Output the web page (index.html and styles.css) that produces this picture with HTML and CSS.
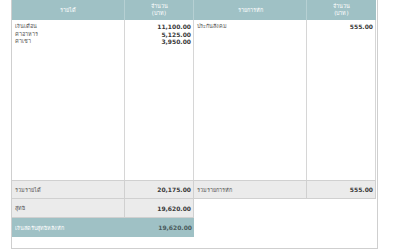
FILE: index.html
```html
<!DOCTYPE html>
<html lang="th">
<head>
<meta charset="utf-8">
<link rel="stylesheet" href="styles.css">
</head>
<body>
<div class="sheet">
  <div class="grid">
    <div class="hd">รายได้</div>
    <div class="hd two">จำนวน<br>(บาท)</div>
    <div class="hd">รายการหัก</div>
    <div class="hd two">จำนวน<br>(บาท)</div>

    <div class="body lbl">
      <div>เงินเดือน</div>
      <div>ค่าอาหาร</div>
      <div>ค่าเช่า</div>
    </div>
    <div class="body num">
      <div>11,100.00</div>
      <div>5,125.00</div>
      <div>3,950.00</div>
    </div>
    <div class="body lbl">
      <div>ประกันสังคม</div>
    </div>
    <div class="body num last">
      <div>555.00</div>
    </div>

    <div class="tot lbl">รวมรายได้</div>
    <div class="tot num">20,175.00</div>
    <div class="tot lbl">รวมรายการหัก</div>
    <div class="tot num last">555.00</div>

    <div class="net lbl">สุทธิ</div>
    <div class="net num">19,620.00</div>
    <div class="blank"></div>

    <div class="fin lbl">เงินสดรับสุทธิหลังหัก</div>
    <div class="fin num">19,620.00</div>
    <div class="blank"></div>
  </div>
</div>
</body>
</html>
```
FILE: styles.css
```css
html, body {
  margin: 0;
  padding: 0;
  background: #ffffff;
}
body {
  font-family: Tahoma, "DejaVu Sans", "Noto Sans", sans-serif;
  color: #444;
}
.sheet {
  margin-left: 11px;
  width: 365px;
  height: 248px;
  border-left: 1px solid #cfcfcf;
  border-right: 1px solid #cfcfcf;
  border-bottom: 1px solid #cfcfcf;
}
.grid {
  display: grid;
  grid-template-columns: 113px 69px 113px 69px;
  grid-template-rows: 20px 160px 19px 19px 19px;
}
.hd {
  background: #9fc1c5;
  color: #ffffff;
  font-size: 5.5px;
  display: flex;
  align-items: center;
  justify-content: center;
  text-align: center;
  line-height: 7px;
  border-right: 1px solid #b6d0d3;
}
.hd:nth-child(4) { border-right: none; }
.body {
  border-right: 1px solid #d6d6d6;
  padding: 3px 3px 0 3px;
  line-height: 7.5px;
}
.lbl {
  font-size: 5.5px;
  color: #555;
}
.num {
  text-align: right;
  font-weight: bold;
  font-size: 6px;
  color: #3a3a3a;
}
.body.num { padding-right: 2px; }
.tot, .net, .fin {
  display: flex;
  align-items: center;
  padding: 0 3px;
}
.num.tot, .num.net, .num.fin { justify-content: flex-end; padding-right: 2px; }
.tot {
  background: #ebebeb;
  border-top: 1px solid #d0d0d0;
  border-bottom: 1px solid #d0d0d0;
  border-right: 1px solid #d0d0d0;
}
.net {
  background: #ebebeb;
  border-bottom: 1px solid #d0d0d0;
  border-right: 1px solid #d0d0d0;
}
.fin {
  background: #9fc1c5;
  color: #ffffff;
}
.fin.num { color: #4a5a5c; }
.blank { grid-column: span 2; }
```
